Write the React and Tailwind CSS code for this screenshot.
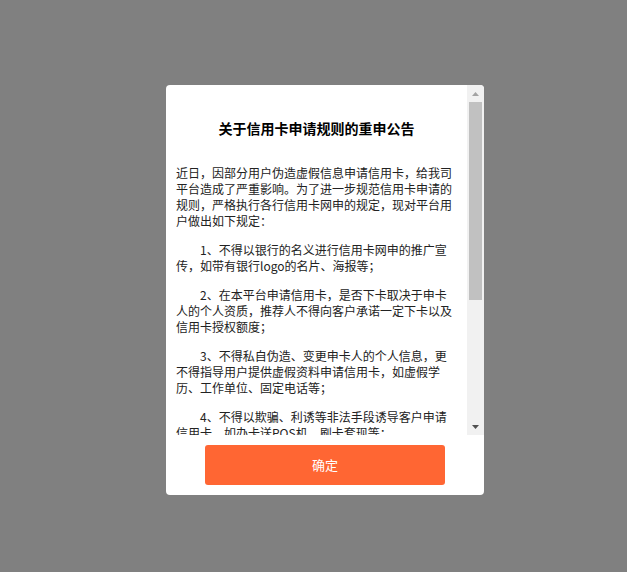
import React from 'react';

const rules = [
    '1、不得以银行的名义进行信用卡网申的推广宣传，如带有银行logo的名片、海报等；',
    '2、在本平台申请信用卡，是否下卡取决于申卡人的个人资质，推荐人不得向客户承诺一定下卡以及信用卡授权额度；',
    '3、不得私自伪造、变更申卡人的个人信息，更不得指导用户提供虚假资料申请信用卡，如虚假学历、工作单位、固定电话等；',
    '4、不得以欺骗、利诱等非法手段诱导客户申请信用卡，如办卡送POS机、刷卡套现等；',
];

export default function App() {
    return (
        <div className="min-h-screen bg-[#808080] pt-[85px] pl-[166px] font-['Noto_Sans_CJK_SC','Noto_Sans',sans-serif]">
            <div className="w-[318px] bg-white rounded-[4px] overflow-hidden">
                {/* Scroll area */}
                <div className="flex h-[350px]">
                    <div className="w-[301px] overflow-hidden px-[10px] pt-[33px] text-[12px] leading-[16px] text-[#222]">
                        <h3 className="text-center text-[14px] leading-[20px] font-bold text-black mb-[27px]">
                            关于信用卡申请规则的重申公告
                        </h3>
                        <p className="mb-[13px]">
                            近日，因部分用户伪造虚假信息申请信用卡，给我司平台造成了严重影响。为了进一步规范信用卡申请的规则，严格执行各行信用卡网申的规定，现对平台用户做出如下规定：
                        </p>
                        {rules.map((r) => (
                            <p key={r} className="mb-[13px] indent-[24px]">{r}</p>
                        ))}
                    </div>

                    {/* Scrollbar */}
                    <div className="w-[17px] bg-[#f1f1f1] flex flex-col">
                        <div className="h-[17px] flex items-center justify-center">
                            <svg width="7" height="4" viewBox="0 0 7 4">
                                <path d="M0 4 L3.5 0 L7 4 Z" fill="#a3a3a3" />
                            </svg>
                        </div>
                        <div className="flex-1 px-[2px]">
                            <div className="h-[198px] bg-[#c1c1c1]" />
                        </div>
                        <div className="h-[17px] flex items-center justify-center">
                            <svg width="7" height="4" viewBox="0 0 7 4">
                                <path d="M0 0 L7 0 L3.5 4 Z" fill="#505050" />
                            </svg>
                        </div>
                    </div>
                </div>

                {/* Footer */}
                <div className="flex justify-center py-[10px]">
                    <button className="w-[240px] h-[40px] bg-[#ff6633] rounded-[3px] text-white text-[13px]">
                        确定
                    </button>
                </div>
            </div>
        </div>
    );
}
